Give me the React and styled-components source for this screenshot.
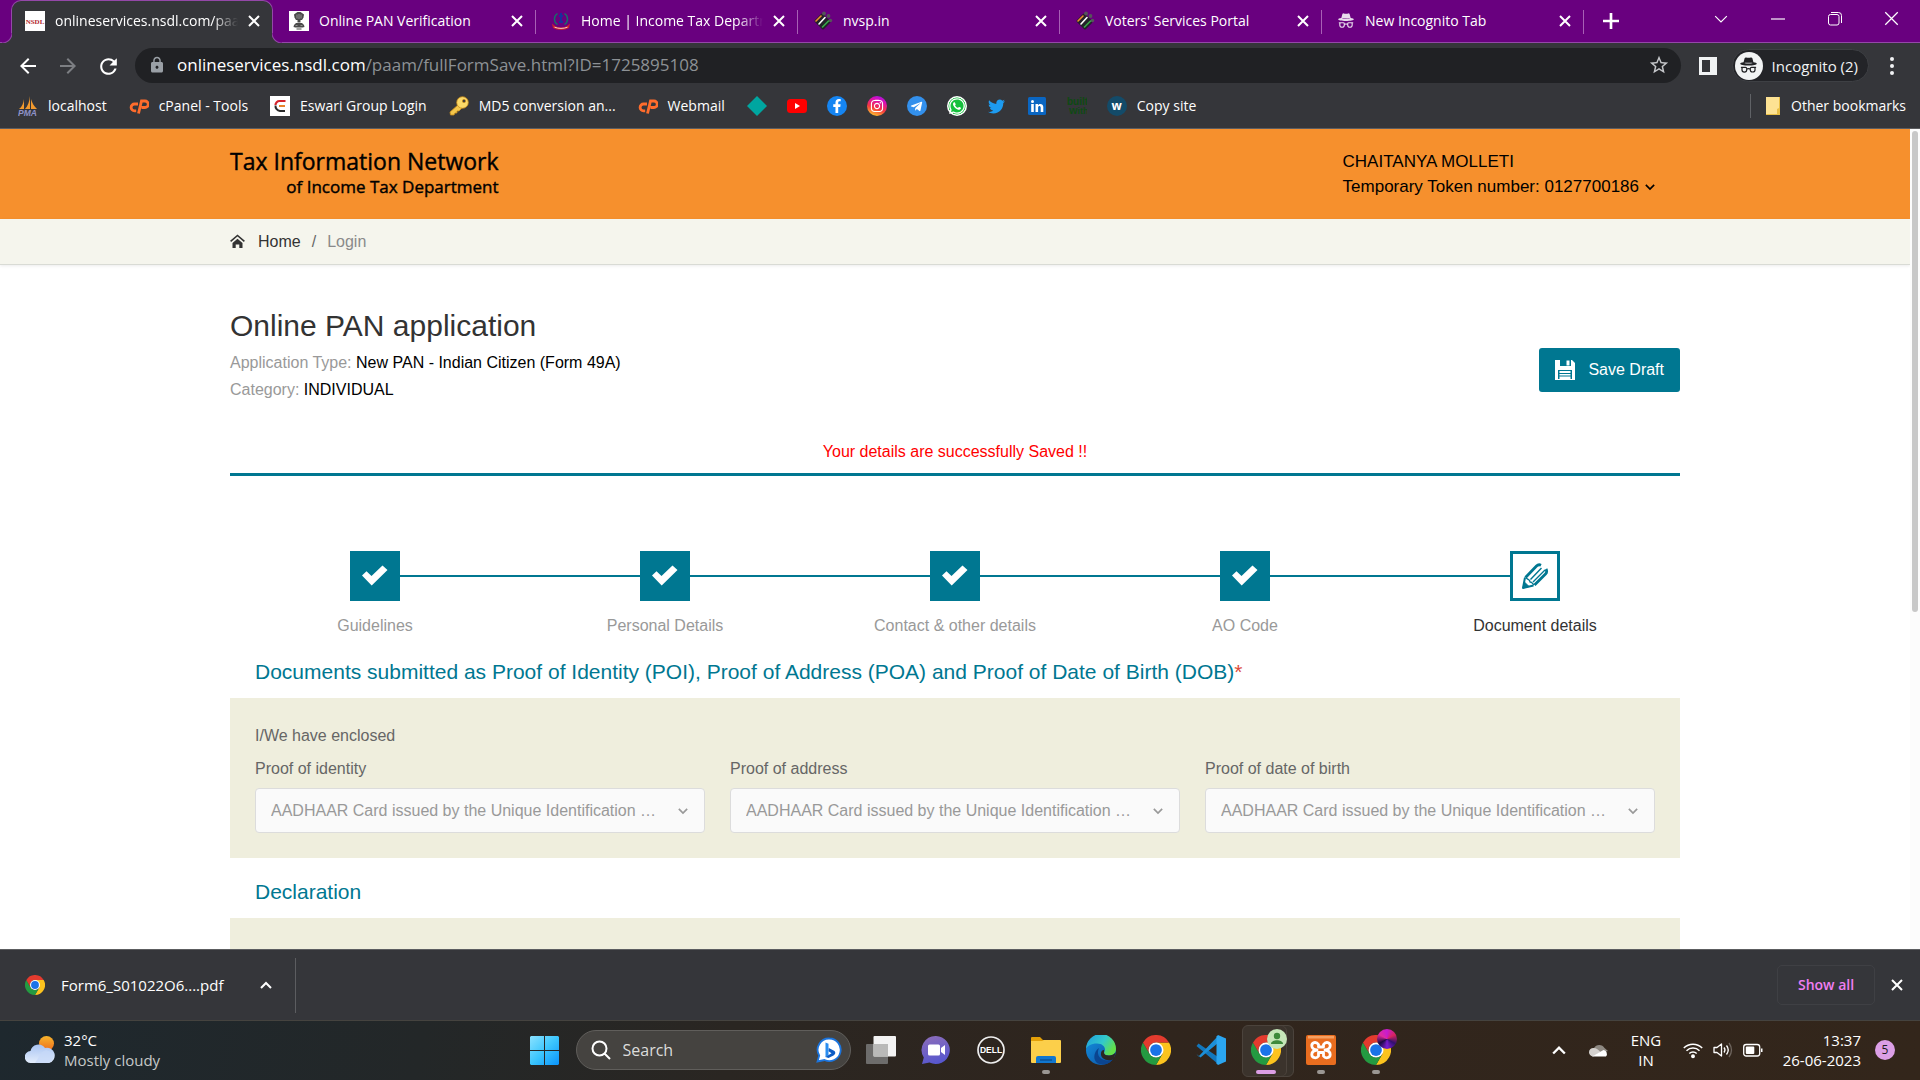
import React from "react";
import styled, { createGlobalStyle, css } from "styled-components";
import { BsIncognito } from "react-icons/bs";
import { FaFacebookF, FaInstagram, FaTelegramPlane, FaWhatsapp, FaTwitter } from "react-icons/fa";
import { MdLock, MdStarOutline, MdRefresh, MdArrowBack, MdArrowForward } from "react-icons/md";

const ui = `"Segoe UI", "Open Sans", "Noto Sans", sans-serif`;
const body = `Arial, "Liberation Sans", sans-serif`;
const teal = "#007791";
const purple = "#69007f";
const line = "#9448a8";
const chrome = "#35363a";

const GlobalStyle = createGlobalStyle`
  * { box-sizing: border-box; }
  html, body { margin: 0; padding: 0; }
  body { font-family: ${ui}; overflow: hidden; }
  svg { display: block; flex: none; }
  button { border: 0; padding: 0; background: none; color: inherit; font: inherit; text-align: left; cursor: pointer; }
  a { color: inherit; text-decoration: none; }
  h1, h2, p { margin: 0; font-weight: 400; }
`;

const Screen = styled.div`
  height: 100vh;
  display: flex;
  flex-direction: column;
  background: #fff;
`;

/* ---------- browser chrome ---------- */
const TabStrip = styled.div`
  flex: none;
  height: 43px;
  padding-left: 11px;
  display: flex;
  background: ${purple};
  box-shadow: inset 0 -1px 0 ${line};
  color: #fff;
  font-size: 14px;
`;

const corner = css`
  content: "";
  position: absolute;
  bottom: 0;
  width: 10px;
  height: 10px;
`;

const Tab = styled.div`
  position: relative;
  flex: 0 1 262px;
  min-width: 0;
  display: flex;
  align-items: center;
  gap: 10px;
  padding: 0 12px 2px 16px;
  ${(p) =>
    p.$active
      ? css`
          background: ${chrome};
          border: 1px solid ${line};
          border-bottom: 0;
          border-radius: 10px 10px 0 0;
          padding: 0 12px 3px 13px;
          &::before {
            ${corner}
            left: -10px;
            background: radial-gradient(circle at 0 0, ${purple} 9px, ${line} 10px, ${chrome} 11px);
          }
          &::after {
            ${corner}
            right: -10px;
            background: radial-gradient(circle at 100% 0, ${purple} 9px, ${line} 10px, ${chrome} 11px);
          }
        `
      : css`
          &::after {
            content: "";
            position: absolute;
            right: -1px;
            top: 10px;
            height: 24px;
            width: 1px;
            background: #a860b5;
          }
        `}
`;

const TabTitle = styled.button`
  flex: 1;
  min-width: 0;
  overflow: hidden;
  white-space: nowrap;
  line-height: 24px;
  ${(p) => p.$fade && css`mask-image: linear-gradient(to right, #000 86%, transparent);`}
`;

const IconButton = styled.button`
  display: grid;
  place-items: center;
  flex: none;
  width: ${(p) => p.$w || 12}px;
  height: ${(p) => p.$h || 24}px;
  color: ${(p) => p.$color || "#fff"};
`;

const WindowButtons = styled.div`
  margin-left: auto;
  display: flex;
  height: 37px;
  align-items: center;
`;

const Toolbar = styled.div`
  flex: none;
  height: 45px;
  display: flex;
  align-items: center;
  padding: 0 8px;
  background: ${chrome};
  color: #f1f3f4;
`;

const Omnibox = styled.div`
  flex: 1;
  height: 35px;
  margin: 0 7px;
  padding: 0 11px 2px 13px;
  display: flex;
  align-items: center;
  gap: 11px;
  border-radius: 18px;
  background: #202124;
  color: #9aa0a6;
`;

const Address = styled.div`
  flex: 1;
  font-size: 17px;
  line-height: 26px;
  color: #8d9195;
  span { color: #fff; }
`;

const ProfileChip = styled.button`
  height: 33px;
  margin: 0 3px 0 4px;
  padding: 0 10px 0 2px;
  display: flex;
  align-items: center;
  gap: 9px;
  border-radius: 17px;
  border: 1px solid #3e4044;
  background: #232428;
  font-size: 15px;
  line-height: 24px;
  white-space: nowrap;
`;

const ProfileDisc = styled.span`
  display: grid;
  place-items: center;
  width: 28px;
  height: 28px;
  border-radius: 50%;
  background: #f1f3f4;
  color: #202124;
`;

const Bookmarks = styled.nav`
  flex: none;
  height: 41px;
  padding: 0 14px 4px 18px;
  display: flex;
  align-items: center;
  gap: 20px;
  background: ${chrome};
  border-bottom: 1px solid #5c5d60;
  color: #fff;
  font-size: 14px;
  line-height: 24px;
  white-space: nowrap;
`;

const Bookmark = styled.a`
  display: flex;
  align-items: center;
  gap: 10px;
`;

const BookmarkLabel = styled.span`
  padding-right: 2px;
`;

const OtherBookmarks = styled(Bookmark)`
  margin-left: auto;
  padding-left: 14px;
  border-left: 1px solid #606266;
`;

const Disc = styled.span`
  display: grid;
  place-items: center;
  width: 20px;
  height: 20px;
  border-radius: 50%;
  background: ${(p) => p.$bg};
  color: #fff;
  font-weight: 700;
  font-size: 12px;
  line-height: 20px;
`;

/* ---------- web page ---------- */
const Viewport = styled.div`
  flex: 1;
  min-height: 0;
  display: flex;
  overflow: hidden;
`;

const Page = styled.div`
  flex: 1;
  min-width: 0;
  overflow: hidden;
  font-family: ${body};
  font-size: 16px;
  line-height: 24px;
  color: #333;
`;

const ScrollTrack = styled.div`
  flex: none;
  width: 10px;
  padding: 2px;
  background: #fcfcfc;
`;

const ScrollThumb = styled.div`
  height: 59%;
  border-radius: 3px;
  background: #c8c8c8;
`;

const Container = styled.div`
  max-width: 1450px;
  margin: 0 auto;
`;

const Banner = styled.header`
  background: #f6902d;
  color: #000;
`;

const BannerInner = styled(Container)`
  display: flex;
  justify-content: space-between;
  padding: 18px 0 20px;
`;

const Logo = styled.a`
  font-family: ${ui};
  text-align: right;
  font-size: 23px;
  line-height: 28px;
  -webkit-text-stroke: 0.4px currentColor;
`;

const LogoSub = styled.span`
  display: block;
  font-size: 17px;
  line-height: 24px;
`;

const Account = styled.button`
  align-self: flex-start;
  margin-top: 2px;
  padding-right: 25px;
  font-size: 17px;
  line-height: 25px;
  span { display: flex; align-items: center; gap: 6px; }
`;

const Crumbs = styled.nav`
  background: #f5f5ed;
  border-bottom: 1px solid #d9dbd5;
  box-shadow: 0 1px 3px rgba(0, 0, 0, 0.08);
`;

const CrumbsInner = styled(Container)`
  height: 45px;
  display: flex;
  align-items: center;
  gap: 11px;
  a { display: flex; align-items: center; gap: 13px; }
  span { color: #8a8a8a; }
  a + span { color: #666; }
`;

const TitleRow = styled.div`
  display: flex;
  justify-content: space-between;
  padding-top: 43px;
`;

const Title = styled.h1`
  font-size: 30px;
  line-height: 36px;
  margin-bottom: 5px;
`;

const Meta = styled.p`
  line-height: 27px;
  color: #999;
  span { color: #000; }
`;

const SaveButton = styled.button`
  align-self: flex-end;
  height: 44px;
  margin-bottom: 11px;
  padding: 0 16px 0 15px;
  display: flex;
  align-items: center;
  gap: 12px;
  border-radius: 3px;
  background: ${teal};
  color: #fff;
`;

const Notice = styled.p`
  margin: 37px 0 75px;
  padding-bottom: 9px;
  border-bottom: 3px solid ${teal};
  text-align: center;
  color: #f00;
`;

const Steps = styled.ol`
  list-style: none;
  margin: 0;
  padding: 0;
  display: flex;
`;

const Step = styled.li`
  flex: 1;
  text-align: center;
  color: ${(p) => (p.$current ? "#333" : "#999")};
`;

const StepTrack = styled.div`
  display: flex;
  align-items: center;
  margin-bottom: 13px;
`;

const StepLine = styled.span`
  flex: 1;
  height: 2px;
  background: ${(p) => (p.$hidden ? "transparent" : teal)};
`;

const StepBox = styled.span`
  display: grid;
  place-items: center;
  width: 50px;
  height: 50px;
  border: 3px solid ${teal};
  background: ${(p) => (p.$current ? "#fff" : teal)};
  color: ${(p) => (p.$current ? teal : "#fff")};
`;

const SectionTitle = styled.h2`
  margin: 20px 25px 12px;
  font-size: 21px;
  line-height: 28px;
  color: ${teal};
  sup { font-size: 21px; line-height: 0; vertical-align: baseline; color: #dd4b39; }
`;

const Panel = styled.section`
  min-height: 120px;
  padding: 26px 25px 25px;
  background: #efeedd;
  color: #666;
`;

const Fields = styled.div`
  display: grid;
  grid-template-columns: repeat(3, 1fr);
  gap: 25px;
  margin-top: 9px;
`;

const Field = styled.div`
  display: flex;
  flex-direction: column;
  gap: 7px;
`;

const SelectShell = styled.div`
  display: grid;
  grid-template-columns: 1fr 43px;
  align-items: center;
  border: 1px solid #dcdcdc;
  border-radius: 4px;
  background: #fafafa;
  color: #999;
  svg { grid-area: 1 / 2; justify-self: center; pointer-events: none; }
`;

const Select = styled.select`
  grid-area: 1 / 1 / 2 / 3;
  height: 43px;
  width: 100%;
  padding: 0 40px 0 15px;
  appearance: none;
  border: 0;
  background: transparent;
  font: inherit;
  color: #999;
  opacity: 1;
`;

/* ---------- download shelf ---------- */
const Shelf = styled.div`
  flex: none;
  height: 71px;
  padding: 0 13px 0 25px;
  display: flex;
  align-items: center;
  border-top: 1px solid #5c5d60;
  background: ${chrome};
  color: #fff;
  font-size: 15px;
  line-height: 24px;
`;

const Download = styled.div`
  width: 271px;
  height: 55px;
  display: flex;
  align-items: center;
  justify-content: space-between;
  padding-right: 19px;
  border-right: 1px solid #5c5d60;
  a { display: flex; align-items: center; gap: 16px; }
`;

const ShowAll = styled.button`
  margin: 0 12px 0 auto;
  width: 98px;
  height: 40px;
  border: 1px solid #3f4044;
  border-radius: 5px;
  color: #f07ef2;
  font-size: 14px;
  font-weight: 600;
  text-align: center;
`;

/* ---------- taskbar ---------- */
const Taskbar = styled.footer`
  flex: none;
  height: 60px;
  padding: 0 25px 1px;
  display: grid;
  grid-template-columns: 1fr auto 1fr;
  align-items: center;
  border-top: 1px solid #45433f;
  background: linear-gradient(100deg, #1e282e 0%, #232728 22%, #2a2622 38%, #30251d 60%, #33261b 100%);
  color: #fff;
  font-size: 15px;
  line-height: 20px;
`;

const Weather = styled.div`
  display: flex;
  align-items: center;
  gap: 9px;
  span { display: block; color: #c6c8c8; }
`;

const Apps = styled.div`
  display: flex;
  align-items: center;
  padding-left: 13px;
`;

const SearchBox = styled.label`
  width: 275px;
  height: 40px;
  margin: 0 3px 0 17px;
  padding: 0 8px 0 14px;
  display: flex;
  align-items: center;
  gap: 12px;
  border: 1px solid #605e5b;
  border-radius: 20px;
  background: #454340;
`;

const SearchInput = styled.input`
  flex: 1;
  min-width: 0;
  border: 0;
  outline: 0;
  padding: 0;
  background: transparent;
  font: 400 16px/24px ${ui};
  color: #dcdcdb;
  &::placeholder { color: #dcdcdb; opacity: 1; }
`;

const AppButton = styled.button`
  position: relative;
  display: grid;
  place-items: center;
  width: 55px;
  height: 58px;
  &::before {
    content: "";
    position: absolute;
    left: 3px;
    top: 4px;
    width: 50px;
    height: 50px;
    border-radius: 6px;
    border: ${(p) => (p.$active ? "1px solid #4b433c" : "0")};
    box-shadow: ${(p) => (p.$active ? "inset -6px 0 0 #38312a, inset -7px 0 0 #4b433c" : "none")};
    background: ${(p) => (p.$active ? "#3b332c" : "transparent")};
  }
  &::after {
    content: "";
    position: absolute;
    top: 49px;
    left: ${(p) => (p.$active ? 17 : 23)}px;
    width: ${(p) => (p.$active ? 20 : 8)}px;
    height: 4px;
    border-radius: 2px;
    background: ${(p) => (p.$active ? "#dc9fe6" : p.$open ? "#9b9793" : "transparent")};
  }
  svg { position: relative; }
`;

const Avatar = styled.span`
  position: absolute;
  top: 8px;
  left: 28px;
  width: 20px;
  height: 20px;
  border-radius: 50%;
  overflow: hidden;
  background: ${(p) => p.$bg};
`;

const Tray = styled.div`
  display: flex;
  align-items: center;
  justify-content: flex-end;
`;

const TrayToggle = styled(IconButton)`
  margin-right: 20px;
`;

const Language = styled.div`
  width: 74px;
  text-align: center;
`;

const Indicators = styled.div`
  display: flex;
  gap: 10px;
`;

const Clock = styled.time`
  width: 98px;
  text-align: right;
`;

const Badge = styled.span`
  width: 20px;
  height: 20px;
  margin-left: 14px;
  border-radius: 50%;
  background: #dc9fe6;
  color: #1c1c1c;
  font-size: 12px;
  text-align: center;
`;

/* ---------- drawings ---------- */
const Stroke = ({ d, size = 12, w = 2, box = 12 }) => (
  <svg width={size} height={size} viewBox={`0 0 ${box} ${box}`} fill="none" stroke="currentColor" strokeWidth={w}>
    <path d={d} />
  </svg>
);

const Cross = ({ size = 12, w = 2 }) => <Stroke size={size} w={w} d="M1 1l10 10M11 1L1 11" />;
const Chevron = ({ size = 12, w = 2, up }) => <Stroke size={size} w={w} d={up ? "M1 9l5-5 5 5" : "M1 3.5l5 5 5-5"} />;

const NsdlIcon = () => (
  <svg width="20" height="20" viewBox="0 0 20 20">
    <rect width="20" height="20" fill="#fff" />
    <text x="10" y="12.500" textAnchor="middle" fontFamily="Liberation Serif" fontWeight="700" fontSize="7" fill="#b3262c">NSDL</text>
  </svg>
);

const EmblemIcon = () => (
  <svg width="20" height="20" viewBox="0 0 20 20">
    <rect width="20" height="20" fill="#fff" />
    <g fill="#4a4a4a">
      <path d="M7 2l1.500-1h3L13 2l2 1.500-.5 3-1.500 2.500H7L5.500 6.500 5 3.500z" />
      <path d="M8.500 9h3v2.500h-3zM5 14l2-2h6l2 2 .5 2-2 .5h-7l-2-.5z" />
      <path d="M7.500 17.500h5v1h-5z" />
    </g>
    <path d="M8 3.500v4M10 3v5M12 3.500v4M6.500 14.500h2M11.500 14.500h2" stroke="#a5a5a5" strokeWidth=".8" />
  </svg>
);

const IncomeTaxIcon = () => (
  <svg width="20" height="20" viewBox="0 0 20 20" fill="none">
    <path d="M6.500 2.500a6.500 6.500 0 0 0 0 11M13.500 2.500a6.500 6.500 0 0 1 0 11" stroke="#14706a" strokeWidth="1.400" />
    <path d="M10 2v10M8 5h4M8 11h4" stroke="#1a2e9c" strokeWidth="1.900" />
    <path d="M1 12.500l3 2.500c4 2 8 2 12 0l3-2.500-1 4.500c-5 2.500-11 2.500-16 0z" fill="#c9202c" />
    <path d="M3.500 16.200c4 1.600 9 1.600 13 0" stroke="#f3c7c9" strokeWidth="1" />
  </svg>
);

const VoteIcon = () => (
  <svg width="20" height="20" viewBox="0 0 20 20" fill="none" strokeLinecap="round">
    <path d="M9 4l7 7-6 6-7-7z" fill="#23222a" stroke="#23222a" strokeWidth="3" strokeLinejoin="round" />
    <circle cx="11" cy="2.500" r="1.900" fill="#55545a" />
    <circle cx="15.500" cy="5" r="1.900" fill="#55545a" />
    <circle cx="17.500" cy="9.500" r="1.700" fill="#55545a" />
    <path d="M3 10l5-5" stroke="#ef8a33" strokeWidth="1.600" />
    <path d="M6 13l6-6.500" stroke="#fff" strokeWidth="1.600" />
    <path d="M9.500 16l6-6" stroke="#3aa94a" strokeWidth="1.600" />
  </svg>
);

const SailIcon = () => (
  <svg width="20" height="20" viewBox="0 0 20 20">
    <path d="M6 3v10H1c3-2 4.500-6 5-10zM12 0v13H7c3-3 4.500-8 5-13zM13 3c1 4 3 7 6 10h-6z" fill="#f29a2e" />
    <text x="0" y="19.500" fontFamily="Liberation Sans" fontWeight="700" fontStyle="italic" fontSize="8.500" fill="#8f92c8">PMA</text>
  </svg>
);

const CpanelIcon = () => (
  <svg width="20" height="20" viewBox="0 0 20 20" fill="none" stroke="#ff6c2c" strokeWidth="2.800">
    <path d="M9 8H5.500a3.400 3.400 0 0 0 0 6.800h1.700" />
    <path d="M9.500 17.500L12.500 5H16a3.100 3.100 0 0 1 0 6.500h-3.500" />
  </svg>
);

const EswariIcon = () => (
  <svg width="20" height="20" viewBox="0 0 20 20" fill="none">
    <rect width="20" height="20" fill="#fff" />
    <path d="M15.500 5H9.500A4 4 0 0 0 5.500 9" stroke="#d5232b" strokeWidth="2.200" />
    <path d="M5.500 9.500a5 5 0 0 0 4.500 5.500h5" stroke="#2a2a2a" strokeWidth="2" />
    <path d="M9 10h6" stroke="#e8832b" strokeWidth="2" />
  </svg>
);

const KeyIcon = () => (
  <svg width="20" height="20" viewBox="0 0 20 20" stroke="#c58a1a" strokeWidth=".8">
    <path d="M10 8L1 16l.5 3H5l1-2h2v-2h2l3-3z" fill="#f3c64b" />
    <circle cx="13.500" cy="6.500" r="5.800" fill="#fbd968" />
    <circle cx="15" cy="5" r="1.600" fill={chrome} />
  </svg>
);

const YoutubeIcon = () => (
  <svg width="20" height="20" viewBox="0 0 20 20">
    <rect y="3" width="20" height="14" rx="3.500" fill="#f00" />
    <path d="M8 7l5 3-5 3z" fill="#fff" />
  </svg>
);

const LinkedinIcon = () => (
  <svg width="20" height="20" viewBox="0 0 20 20">
    <rect x="1" y="1" width="18" height="18" rx="1.500" fill="#0a66c2" />
    <circle cx="5.500" cy="5.500" r="1.500" fill="#fff" />
    <path d="M4.200 8h2.600v8H4.200zM8.500 8H11v1.200c1.200-2 5.300-1.900 5.300 1.800v5h-2.600v-4.300c0-2.200-2.600-2-2.600 0V16H8.500z" fill="#fff" />
  </svg>
);

const BuiltIcon = () => (
  <svg width="20" height="20" viewBox="0 0 20 20" fontFamily="Liberation Sans" fontWeight="700" fill="#0d4a12">
    <text x="0" y="9" fontSize="10">built</text>
    <text x="2" y="18" fontSize="9">With</text>
  </svg>
);

const FolderIcon = () => (
  <svg width="16" height="20" viewBox="0 0 16 20">
    <path d="M1 1h14v18H1z" fill="#fde293" />
    <path d="M14 1h1v18H1v-1h11v-5l2-1z" fill="#e9bf45" />
  </svg>
);

const HomeIcon = () => (
  <svg width="15" height="15" viewBox="0 0 15 15" fill="none">
    <path d="M.6 7.400L7.500 1.500l6.900 5.900" stroke="#333" strokeWidth="1.600" />
    <path d="M2.500 9l5-4.300 5 4.300v5H9.300v-3.600H5.700V14H2.500z" fill="#333" />
  </svg>
);

const SaveIcon = () => (
  <svg width="22" height="22" viewBox="0 0 22 22">
    <path d="M1 1h17l3 3v17H1z" fill="#fff" />
    <path d="M6 1h11v6H6z" fill={teal} />
    <path d="M12.500 1.500h3v5h-3z" fill="#fff" />
    <path d="M4 11h14v9H4z" fill={teal} />
    <path d="M5.500 12h11v2h-11zM5.500 15h11v1.500h-11zM5.500 17.500h11V20h-11z" fill="#fff" />
  </svg>
);

const CheckIcon = () => (
  <svg width="26" height="22" viewBox="0 0 26 22">
    <path d="M0 10.500l4.500-4.200 5 4.800L20.500.5 25.500 5 9.700 20.500z" fill="currentColor" />
  </svg>
);

const PencilIcon = () => (
  <svg width="28" height="28" viewBox="0 0 28 28" fill="none" stroke="currentColor" strokeLinejoin="round">
    <path d="M4.500 15.500L15.500 4c1.200-1.200 3-1.500 4.500-.8M13.500 23L24.500 12c1.200-1.200 1.500-3 .5-5" strokeWidth="2.800" />
    <path d="M9.500 17.500L20.500 6M12 20L24 8" strokeWidth="1.400" />
    <path d="M4 15.500L2 26l10.500-2.500" strokeWidth="2" />
    <path d="M5 15.500c1 2.500 4 1.500 4 4.500 2.500 0 2.500 2 4 3" strokeWidth="1.300" />
    <path d="M2 26l1.400-6 4.600 4.500z" fill="currentColor" />
  </svg>
);

const ChromeIcon = ({ size = 30 }) => (
  <svg width={size} height={size} viewBox="0 0 48 48">
    <path d="M24 12h20.800A24 24 0 0 1 24 48l10.400-18z" fill="#fcc31e" />
    <path d="M3.200 12l10.400 18A12 12 0 0 0 34.400 30L24 48A24 24 0 0 1 3.200 12z" fill="#249a41" />
    <path d="M3.200 12A24 24 0 0 1 44.800 12H24a12 12 0 0 0-10.400 18z" fill="#e33b2e" />
    <circle cx="24" cy="24" r="12" fill="#fff" />
    <circle cx="24" cy="24" r="9.400" fill="#1a73e8" />
  </svg>
);

const WeatherIcon = () => (
  <svg width="30" height="30" viewBox="0 0 30 30">
    <defs>
      <linearGradient id="sun" x2="0" y2="1"><stop stopColor="#f7b52c" /><stop offset="1" stopColor="#ee6c1e" /></linearGradient>
      <linearGradient id="cloud" x2="0" y2="1"><stop stopColor="#a9c4f2" /><stop offset="1" stopColor="#e3edfc" /></linearGradient>
    </defs>
    <circle cx="21.500" cy="8.500" r="7.500" fill="url(#sun)" />
    <path d="M6 28a6 6 0 0 1-.5-12A8 8 0 0 1 20 13a7 7 0 0 1 4 15z" fill="url(#cloud)" />
    <path d="M17 17a6.600 6.600 0 1 1 7 11H10" fill="#c6d9f8" opacity=".7" />
  </svg>
);

const WindowsIcon = () => (
  <svg width="29" height="29" viewBox="0 0 29 29">
    <defs><linearGradient id="win" x2="1" y2="1"><stop stopColor="#8be2ff" /><stop offset=".5" stopColor="#3cc6fd" /><stop offset="1" stopColor="#0a93fb" /></linearGradient></defs>
    <path d="M1 0h13v14H0V1zM15 0h13l1 1v13H15zM0 15h14v14H1l-1-1zM15 15h14v13l-1 1H15z" fill="url(#win)" />
  </svg>
);

const BingIcon = () => (
  <svg width="26" height="26" viewBox="0 0 26 26">
    <path d="M13.500 1.500a11.300 11.300 0 1 1-5 21.500l-7 1.500 1.700-6A11.300 11.300 0 0 1 13.500 1.500z" fill="#fff" stroke="#1b74dd" strokeWidth="1.800" />
    <path d="M9.500 5.500l3 1.200v11.500l-3 2z" fill="#2a8df0" />
    <path d="M9.500 20l3.500-2.300 2.500-1.500-3-2 .3-3.200 5.700 3c1.500 1.500.8 3.500-1 4.500l-5 2.500z" fill="#0d5cc4" />
  </svg>
);

const TaskViewIcon = () => (
  <svg width="30" height="28" viewBox="0 0 30 28">
    <rect y="8" width="22" height="20" rx="1" fill="#6d6c6b" />
    <rect x="7.500" y="0" width="22.500" height="20.500" rx="1" fill="#f3f3f3" />
    <rect x="7.500" y="8" width="14.500" height="12.500" fill="#b9b9b8" />
  </svg>
);

const ChatIcon = () => (
  <svg width="30" height="30" viewBox="0 0 30 30">
    <defs><linearGradient id="chat" x1=".3" x2=".6" y2="1"><stop stopColor="#8a6cba" /><stop offset="1" stopColor="#5556cf" /></linearGradient></defs>
    <path d="M15 1a14 14 0 1 1-6.500 26.500L1 29l1.800-6.500A14 14 0 0 1 15 1z" fill="url(#chat)" />
    <rect x="7" y="9.500" width="12" height="11" rx="1.500" fill="#fff" />
    <path d="M20 13l4-3v10l-4-3z" fill="#fff" />
  </svg>
);

const DellIcon = () => (
  <svg width="28" height="28" viewBox="0 0 28 28">
    <circle cx="14" cy="14" r="13" fill="none" stroke="#eee" strokeWidth="1.700" />
    <text x="14" y="17.200" textAnchor="middle" fontFamily="Liberation Sans" fontWeight="700" fontSize="8.500" fill="#fff">DELL</text>
  </svg>
);

const ExplorerIcon = () => (
  <svg width="30" height="28" viewBox="0 0 30 28">
    <path d="M0 2q0-1 1-1h8l3 3h17v8H0z" fill="#e3a008" />
    <path d="M0 5h11l2-1h16q1 0 1 1v21q0 1-1 1H1q-1 0-1-1z" fill="#fccf4a" />
    <path d="M5 27v-5q0-2 2-2h16q2 0 2 2v5z" fill="#1177cf" />
    <path d="M9 24h12" stroke="#0b4f92" strokeWidth="1.400" />
  </svg>
);

const EdgeIcon = () => (
  <svg width="30" height="30" viewBox="0 0 30 30">
    <defs>
      <linearGradient id="edgeTop" x2="1" y2=".5"><stop stopColor="#1e9be0" /><stop offset=".6" stopColor="#33c9ca" /><stop offset="1" stopColor="#62e04b" /></linearGradient>
      <linearGradient id="edgeLow" x2="1" y2="1"><stop stopColor="#1491e0" /><stop offset="1" stopColor="#0c4fa0" /></linearGradient>
    </defs>
    <circle cx="15" cy="15" r="15" fill="url(#edgeLow)" />
    <path d="M0 14A15 15 0 0 1 30 14c0 4.500-3.500 6.500-7 6.500-3.500 0-5-1.500-5-2.500 0-.8 1-1.200 1-3.500C19 11.500 16 8.500 11 8.500 5 8.500 1 11 0 14z" fill="url(#edgeTop)" />
    <path d="M13 13c-3 6 .5 13 9.500 12.500 2-.2 4-1 5-2C24 29 17 31 12 28.500 6 25 8 16 13 13z" fill="#0b4590" />
    <path d="M18 17.500c0 2 1.500 3 5 3 2.500 0 5-1 6.500-3L28 24c-6 3-14 0-13-6 .2-2 1.500-3 3-3z" fill="#2b2622" />
  </svg>
);

const CodeIcon = () => (
  <svg width="30" height="30" viewBox="0 0 30 30">
    <path d="M2.500 8.500L22 22v7L.5 11z" fill="#1277bd" />
    <path d="M2.500 21.500L22 1v7L4.500 22.500.5 19z" fill="#1c8fd8" />
    <path d="M22 0l8 3.500v23L22 30l-1.500-1.500v-27z" fill="#2ba6f0" />
  </svg>
);

const XamppIcon = () => (
  <svg width="30" height="30" viewBox="0 0 30 30">
    <rect width="30" height="30" rx="2" fill="#e96d1f" />
    <rect x="2" y="1" width="26" height="2.500" fill="#f5a062" />
    <path d="M12.500 9.500C10 6 5.500 7.500 5.800 11c.2 2.500 2.200 3.500 5.200 4-3 .5-5.200 1.500-5.200 4.500 0 3.500 4.700 4.500 6.700 1.500v-3.500h5V21c2 3 6.700 2 6.700-1.500 0-3-2.200-4-5.200-4.500 3-.5 5-1.500 5.200-4 .3-3.500-4.200-5-6.700-1.500V12h-5z" fill="none" stroke="#fff" strokeWidth="2.800" strokeLinejoin="round" />
  </svg>
);

const PersonIcon = () => (
  <svg width="20" height="20" viewBox="0 0 20 20">
    <circle cx="10" cy="7" r="3.200" fill="#3d8a3a" />
    <path d="M4 15c0-5 12-5 12 0z" fill="#3d8a3a" />
  </svg>
);

const CloudIcon = () => (
  <svg width="20" height="14" viewBox="0 0 20 14">
    <path d="M5 5a6 6 0 0 1 10.500 0L19 8 6 12z" fill="#8e8983" />
    <path d="M4 13.500a4 4 0 0 1 .5-8.500c3 0 5 2 7 4z" fill="#d4d1ce" />
    <path d="M3 13.500L14.500 7A4 4 0 0 1 17 13.500z" fill="#fff" />
  </svg>
);

const WifiIcon = () => (
  <svg width="20" height="18" viewBox="0 0 20 18" fill="none" stroke="#fff" strokeWidth="1.500">
    <path d="M.8 7a13 13 0 0 1 18.400 0M3.500 9.800a9.200 9.200 0 0 1 13 0M6.300 12.500a5.300 5.300 0 0 1 7.400 0" />
    <circle cx="10" cy="15.300" r="1.200" fill="#fff" />
  </svg>
);

const SpeakerIcon = () => (
  <svg width="20" height="18" viewBox="0 0 20 18" fill="none" stroke="#fff" strokeWidth="1.300">
    <path d="M1 6.500h3L8.500 3v12L4 11.500H1z" strokeLinejoin="round" />
    <path d="M11 6.500q2 2.500 0 5M13.500 4.500q3.500 4.500 0 9" />
    <path d="M16 2q5 7 0 14" stroke="#6d645d" />
  </svg>
);

const BatteryIcon = () => (
  <svg width="20" height="18" viewBox="0 0 20 18">
    <rect x=".7" y="3.500" width="16" height="11.500" rx="2.500" fill="none" stroke="#fff" strokeWidth="1.300" />
    <rect x="2.800" y="5.500" width="8.500" height="7.500" rx="1" fill="#fff" />
    <path d="M18 7.500h1.500v3.500H18z" fill="#fff" />
  </svg>
);

const RestoreIcon = () => (
  <svg width="14" height="14" viewBox="0 0 14 14" fill="none" stroke="currentColor">
    <rect x=".5" y="2.500" width="10.500" height="10.500" rx="2" />
    <path d="M3 .5h7.500a3 3 0 0 1 3 3V11" />
  </svg>
);

/* ---------- data ---------- */
const tabs = [
  { title: "onlineservices.nsdl.com/paam", icon: <NsdlIcon />, active: true, fade: true },
  { title: "Online PAN Verification", icon: <EmblemIcon /> },
  { title: "Home | Income Tax Department", icon: <IncomeTaxIcon />, fade: true },
  { title: "nvsp.in", icon: <VoteIcon /> },
  { title: "Voters' Services Portal", icon: <VoteIcon /> },
  { title: "New Incognito Tab", icon: <BsIncognito size={18} color="#e8dcec" /> },
];

const bookmarks = [
  { label: "localhost", icon: <SailIcon /> },
  { label: "cPanel - Tools", icon: <CpanelIcon /> },
  { label: "Eswari Group Login", icon: <EswariIcon /> },
  { label: "MD5 conversion an...", icon: <KeyIcon /> },
  { label: "Webmail", icon: <CpanelIcon /> },
  { name: "Teal", icon: <svg width="20" height="20"><path d="M10 0l10 10-10 10L0 10z" fill="#00a6a0" /></svg> },
  { name: "YouTube", icon: <YoutubeIcon /> },
  { name: "Facebook", icon: <Disc $bg="#1585f2"><FaFacebookF size={14} /></Disc> },
  { name: "Instagram", icon: <Disc $bg="linear-gradient(20deg, #fdc02f 10%, #f5383f 40%, #d80dbd 75%, #8a1df0)"><FaInstagram size={14} /></Disc> },
  { name: "Telegram", icon: <Disc $bg="#3390ec"><FaTelegramPlane size={13} /></Disc> },
  { name: "WhatsApp", icon: <Disc $bg="radial-gradient(#14c03c 58%, #fff 62%)"><FaWhatsapp size={18} /></Disc> },
  { name: "Twitter", icon: <Disc $bg="transparent"><FaTwitter size={17} color="#1d9bf0" /></Disc> },
  { name: "LinkedIn", icon: <LinkedinIcon /> },
  { name: "BuiltWith", icon: <BuiltIcon /> },
  { label: "Copy site", icon: <Disc $bg="#134b69">w</Disc> },
];

const steps = ["Guidelines", "Personal Details", "Contact & other details", "AO Code", "Document details"];

const proofs = [
  ["poi", "Proof of identity"],
  ["poa", "Proof of address"],
  ["dob", "Proof of date of birth"],
];

const apps = [
  { name: "Task view", icon: <TaskViewIcon /> },
  { name: "Chat", icon: <ChatIcon /> },
  { name: "Dell", icon: <DellIcon /> },
  { name: "File Explorer", icon: <ExplorerIcon />, open: true },
  { name: "Edge", icon: <EdgeIcon /> },
  { name: "Chrome", icon: <ChromeIcon /> },
  { name: "Code", icon: <CodeIcon /> },
  { name: "Chrome, incognito", icon: <ChromeIcon />, active: true, avatar: <Avatar $bg="#c5e6b8"><PersonIcon /></Avatar> },
  { name: "XAMPP", icon: <XamppIcon />, open: true },
  { name: "Chrome, profile", icon: <ChromeIcon />, open: true, avatar: <Avatar $bg="conic-gradient(#c71bd0, #d8245e, #30106e, #7a1bd0, #1a0b45, #e02aa0, #c71bd0)" /> },
];

function Browser() {
  return (
    <>
      <TabStrip>
        {tabs.map((t) => (
          <Tab key={t.title} $active={t.active}>
            {t.icon}
            <TabTitle $fade={t.fade}>{t.title}</TabTitle>
            <IconButton aria-label="Close tab"><Cross /></IconButton>
          </Tab>
        ))}
        <IconButton $w={56} $h={42} aria-label="New tab"><Stroke size={16} w={2} d="M6 0v12M0 6h12" /></IconButton>
        <WindowButtons>
          <IconButton $w={57} aria-label="Search tabs"><Chevron size={14} w={1} /></IconButton>
          <IconButton $w={57} aria-label="Minimise"><Stroke size={14} w={1} d="M0 6h12" /></IconButton>
          <IconButton $w={57} aria-label="Restore"><RestoreIcon /></IconButton>
          <IconButton $w={57} aria-label="Close"><Cross size={15} w={1} /></IconButton>
        </WindowButtons>
      </TabStrip>
      <Toolbar>
        <IconButton $w={40} aria-label="Back"><MdArrowBack size={24} /></IconButton>
        <IconButton $w={40} $color="#7d7f83" aria-label="Forward"><MdArrowForward size={24} /></IconButton>
        <IconButton $w={40} aria-label="Reload"><MdRefresh size={25} /></IconButton>
        <Omnibox>
          <MdLock size={18} />
          <Address><span>onlineservices.nsdl.com</span>/paam/fullFormSave.html?ID=1725895108</Address>
          <MdStarOutline size={22} color="#c5c7ca" />
        </Omnibox>
        <IconButton $w={40} aria-label="Side panel">
          <svg width="18" height="18"><path d="M0 0h18v18H0zM3 3v12h8V3z" fill="#f1f3f4" fillRule="evenodd" /></svg>
        </IconButton>
        <ProfileChip>
          <ProfileDisc><BsIncognito size={19} /></ProfileDisc>
          Incognito (2)
        </ProfileChip>
        <IconButton $w={40} aria-label="Menu">
          <svg width="4" height="18" fill="#f1f3f4"><circle cx="2" cy="2" r="2" /><circle cx="2" cy="9" r="2" /><circle cx="2" cy="16" r="2" /></svg>
        </IconButton>
      </Toolbar>
      <Bookmarks>
        {bookmarks.map((b) => (
          <Bookmark key={b.label || b.name} href="#" aria-label={b.label || b.name}>
            {b.icon}
            {b.label && <BookmarkLabel>{b.label}</BookmarkLabel>}
          </Bookmark>
        ))}
        <OtherBookmarks href="#"><FolderIcon />Other bookmarks</OtherBookmarks>
      </Bookmarks>
    </>
  );
}

function PanForm() {
  return (
    <Page>
      <Banner>
        <BannerInner>
          <Logo href="#">Tax Information Network<LogoSub>of Income Tax Department</LogoSub></Logo>
          <Account>
            CHAITANYA MOLLETI
            <span>Temporary Token number: 0127700186 <Chevron size={10} w={2} /></span>
          </Account>
        </BannerInner>
      </Banner>
      <Crumbs>
        <CrumbsInner>
          <a href="#"><HomeIcon />Home</a>
          <span>/</span>
          <span>Login</span>
        </CrumbsInner>
      </Crumbs>
      <Container>
        <TitleRow>
          <div>
            <Title>Online PAN application</Title>
            <Meta>Application Type: <span>New PAN - Indian Citizen (Form 49A)</span></Meta>
            <Meta>Category: <span>INDIVIDUAL</span></Meta>
          </div>
          <SaveButton><SaveIcon />Save Draft</SaveButton>
        </TitleRow>
        <Notice>Your details are successfully Saved !!</Notice>
        <Steps>
          {steps.map((s, i) => {
            const current = i === steps.length - 1;
            return (
              <Step key={s} $current={current}>
                <StepTrack>
                  <StepLine $hidden={i === 0} />
                  <StepBox $current={current}>{current ? <PencilIcon /> : <CheckIcon />}</StepBox>
                  <StepLine $hidden={current} />
                </StepTrack>
                {s}
              </Step>
            );
          })}
        </Steps>
        <SectionTitle>
          Documents submitted as Proof of Identity (POI), Proof of Address (POA) and Proof of Date of Birth (DOB)<sup>*</sup>
        </SectionTitle>
        <Panel>
          <p>I/We have enclosed</p>
          <Fields>
            {proofs.map(([id, label]) => (
              <Field key={id}>
                <label htmlFor={id}>{label}</label>
                <SelectShell>
                  <Select id={id} disabled>
                    <option>AADHAAR Card issued by the Unique Identification …</option>
                  </Select>
                  <Chevron size={10} w={2} />
                </SelectShell>
              </Field>
            ))}
          </Fields>
        </Panel>
        <SectionTitle>Declaration</SectionTitle>
        <Panel />
      </Container>
    </Page>
  );
}

export default function App() {
  return (
    <Screen>
      <GlobalStyle />
      <Browser />
      <Viewport>
        <PanForm />
        <ScrollTrack><ScrollThumb /></ScrollTrack>
      </Viewport>
      <Shelf>
        <Download>
          <a href="#"><ChromeIcon size={20} />Form6_S01022O6....pdf</a>
          <IconButton $w={20} aria-label="Download options"><Chevron up size={12} w={2} /></IconButton>
        </Download>
        <ShowAll>Show all</ShowAll>
        <IconButton $w={20} aria-label="Close downloads"><Cross size={12} w={2} /></IconButton>
      </Shelf>
      <Taskbar>
        <Weather>
          <WeatherIcon />
          <div>32°C<span>Mostly cloudy</span></div>
        </Weather>
        <Apps>
          <IconButton $w={29} $h={40} aria-label="Start"><WindowsIcon /></IconButton>
          <SearchBox>
            <Stroke size={20} box={20} w={2} d="M13.5 13.5l5.5 5.5M1.5 8.5a7 7 0 1 0 14 0a7 7 0 1 0-14 0" />
            <SearchInput type="text" placeholder="Search" aria-label="Search" />
            <BingIcon />
          </SearchBox>
          {apps.map((a) => (
            <AppButton key={a.name} aria-label={a.name} $open={a.open} $active={a.active}>
              {a.icon}
              {a.avatar}
            </AppButton>
          ))}
        </Apps>
        <Tray>
          <TrayToggle $w={20} aria-label="Show hidden icons"><Chevron up size={14} w={2} /></TrayToggle>
          <CloudIcon />
          <Language>ENG<br />IN</Language>
          <Indicators><WifiIcon /><SpeakerIcon /><BatteryIcon /></Indicators>
          <Clock>13:37<br />26-06-2023</Clock>
          <Badge>5</Badge>
        </Tray>
      </Taskbar>
    </Screen>
  );
}
